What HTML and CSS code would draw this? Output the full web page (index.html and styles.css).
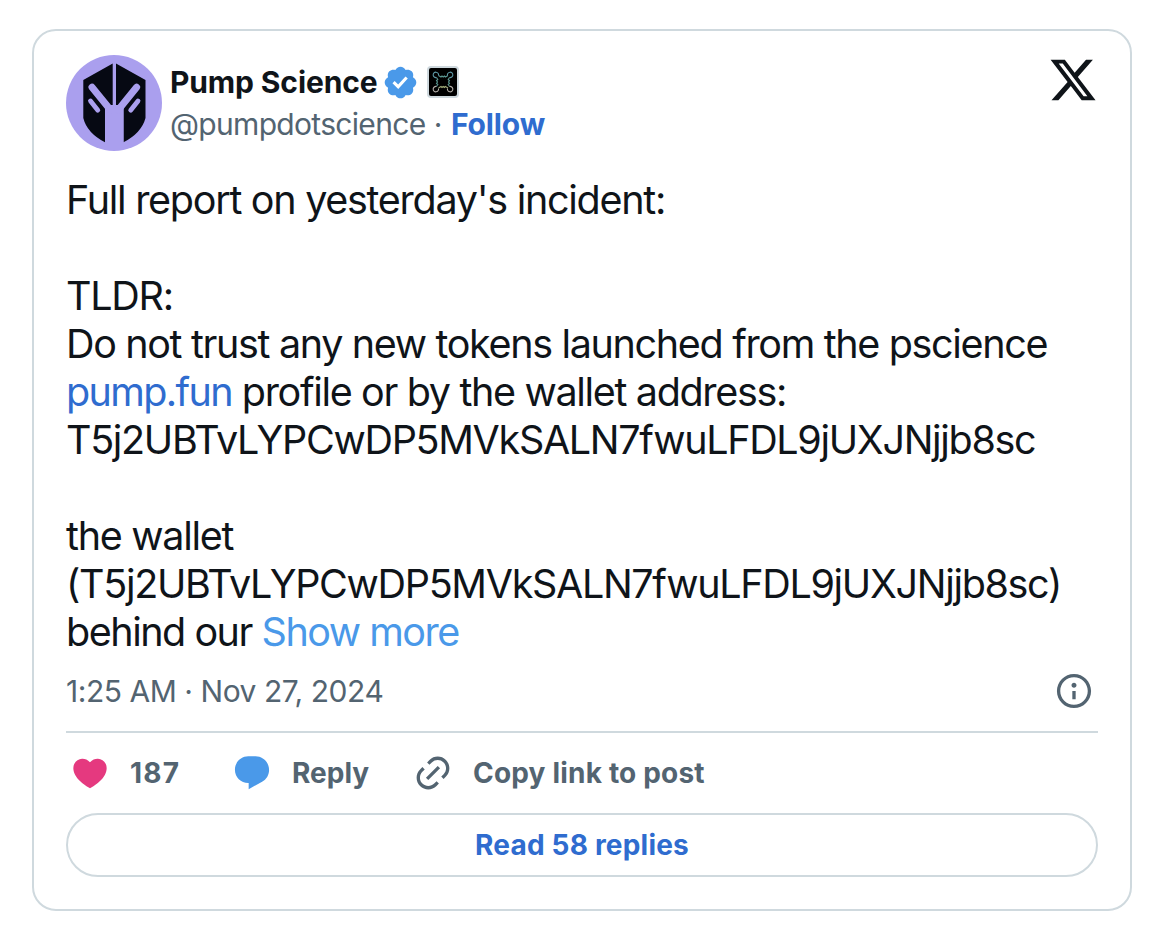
FILE: index.html
```html
<!DOCTYPE html>
<html lang="en">
<head>
<meta charset="utf-8">
<title>Pump Science post</title>
<link rel="stylesheet" href="styles.css">
</head>
<body>
<article class="card">
  <header class="header">
    <svg class="avatar" viewBox="0 0 96 96">
      <circle cx="48" cy="48" r="48" fill="#aa9fee"/>
      <path d="M46.700 8.500L17.300 25V63Q21 78 39 87.300V50H46.700ZM50 8.500L79.500 25V63Q75.500 78 57.500 87.300V50H50Z" fill="#060913"/>
      <path d="M39 53L46.700 51.500H50L57.500 53V88H39Z" fill="#aa9fee"/>
      <path d="M26 32.300L44.500 55M70.600 32.300L52.200 55" stroke="#aa9fee" stroke-width="7" stroke-linecap="round"/>
      <path d="M24.500 46l7.300 9.200M72 46l-7.300 9.200" stroke="#aa9fee" stroke-width="4.800" stroke-linecap="round"/>
    </svg>
    <div class="author">
      <div class="name-row">
        <span class="name">Pump Science</span>
        <svg class="verified" viewBox="0 0 24 24"><path d="M22.250 12c0-1.430-.88-2.670-2.190-3.340.46-1.390.2-2.900-.81-3.910s-2.520-1.270-3.910-.81c-.66-1.310-1.910-2.190-3.340-2.190s-2.670.88-3.330 2.190c-1.400-.46-2.910-.2-3.920.81s-1.260 2.520-.8 3.910c-1.310.67-2.200 1.910-2.200 3.340s.89 2.670 2.200 3.340c-.46 1.390-.21 2.900.8 3.910s2.520 1.260 3.910.81c.67 1.310 1.910 2.190 3.340 2.190s2.680-.88 3.340-2.190c1.390.45 2.900.2 3.910-.81s1.270-2.520.81-3.910c1.310-.67 2.190-1.910 2.190-3.340zm-11.710 4.200L6.800 12.460l1.410-1.420 2.260 2.260 4.800-5.230 1.470 1.360-6.200 6.770z"/></svg>
        <svg class="affiliate" viewBox="0 0 32 32">
          <rect x="1" y="1" width="30" height="30" rx="3" fill="#000" stroke="#cfd9de" stroke-width="2"/>
          <g fill="none" stroke-width="1.100">
            <path d="M11.500 9.500l2.500 1.500 1-1 1.200 1 1.200-1 1 1 2.600-1.500M9.500 11.500l1.300 2-1.300 1 1 1.500-1 1.500 1.300 1-1.300 2M22.500 11.500l-1.300 2 1.300 1-1 1.500 1 1.500-1.300 1 1.300 2" stroke="#5b9690"/>
            <path d="M11.500 22l2.500-1.500 1 1 1.200-1 1.200 1 1-1 2.600 1.500" stroke="#a0aa78"/>
            <path d="M9.500 11.500a2.700 2.700 0 1 1 2-2M22.500 11.500a2.700 2.700 0 1 0-2-2" stroke="#5f9ba8"/>
            <path d="M9.500 20.500a2.700 2.700 0 1 0 2 2M22.500 20.500a2.700 2.700 0 1 1-2 2" stroke="#b5b0aa"/>
          </g>
        </svg>
      </div>
      <div class="handle-row"><span class="handle">@pumpdotscience</span><span class="dot">·</span><a class="follow">Follow</a></div>
    </div>
    <svg class="x-logo" viewBox="0 0 24 24"><path d="M18.244 2.250h3.308l-7.227 8.260 8.502 11.240H16.170l-5.214-6.817L4.990 21.750H1.680l7.730-8.835L1.254 2.250H8.080l4.713 6.231zm-1.161 17.520h1.833L7.084 4.126H5.117z"/></svg>
  </header>
  <div class="body">
    <p>Full report on yesterday's incident:</p>
    <p class="gap">TLDR:<br><span class="trust">Do not trust any new tokens launched from the pscience</span><br><span class="profile"><a class="link">pump.fun</a> profile or by the wallet address:</span><br><span class="address">T5j2UBTvLYPCwDP5MVkSALN7fwuLFDL9jUXJNjjb8sc</span></p>
    <p class="gap">the wallet<br><span class="address">(T5j2UBTvLYPCwDP5MVkSALN7fwuLFDL9jUXJNjjb8sc)</span><br><span class="last">behind our <a class="more">Show more</a></span></p>
  </div>
  <div class="meta">
    <time class="time">1:25 AM · Nov 27, 2024</time>
    <svg class="icon info" viewBox="0 0 24 24"><path d="M13.500 8.500c0 .83-.67 1.500-1.500 1.500s-1.500-.67-1.500-1.500S11.170 7 12 7s1.500.67 1.500 1.500zM13 17v-5h-2v5h2zm-1 5.250c5.660 0 10.250-4.590 10.250-10.250S17.660 1.750 12 1.750 1.750 6.340 1.750 12 6.340 22.250 12 22.250zM20.250 12c0 4.560-3.690 8.250-8.250 8.250S3.750 16.560 3.750 12 7.440 3.750 12 3.750s8.250 3.690 8.250 8.250z"/></svg>
  </div>
  <div class="actions">
    <div class="action like"><svg class="icon heart" viewBox="0 0 24 24"><path d="M20.884 13.190c-1.351 2.480-4.001 5.120-8.379 7.670l-.503.3-.504-.3c-4.379-2.550-7.029-5.190-8.382-7.670-1.360-2.500-1.410-4.860-.514-6.670.887-1.790 2.647-2.910 4.601-3.010 1.651-.09 3.368.56 4.798 2.010 1.429-1.450 3.146-2.100 4.796-2.010 1.954.1 3.714 1.220 4.601 3.010.896 1.810.846 4.170-.514 6.670z"/></svg><span class="count">187</span></div>
    <div class="action reply"><svg class="icon bubble" viewBox="0 0 24 24"><path d="M1.751 10c0-4.420 3.584-8 8.005-8h4.366c4.490 0 8.129 3.640 8.129 8.130 0 2.960-1.607 5.680-4.196 7.110l-8.054 4.460v-3.690h-.067c-4.490.1-8.183-3.510-8.183-8.010z"/></svg><span>Reply</span></div>
    <div class="action copy"><svg class="icon" viewBox="0 0 24 24"><path d="M18.360 5.640c-1.950-1.960-5.110-1.960-7.070 0L9.880 7.050 8.460 5.640l1.420-1.420c2.730-2.730 7.160-2.730 9.900 0 2.730 2.740 2.730 7.170 0 9.900l-1.420 1.420-1.410-1.420 1.410-1.410c1.960-1.960 1.960-5.120 0-7.070zm-2.120 3.530l-7.070 7.070-1.410-1.410 7.070-7.070 1.410 1.410zm-12.020.71l1.420-1.420 1.410 1.420-1.410 1.410c-1.960 1.960-1.960 5.120 0 7.070 1.950 1.960 5.110 1.960 7.070 0l1.410-1.410 1.420 1.410-1.420 1.420c-2.730 2.730-7.160 2.730-9.900 0-2.730-2.740-2.730-7.170 0-9.900z"/></svg><span>Copy link to post</span></div>
  </div>
  <a class="replies">Read 58 replies</a>
</article>
</body>
</html>
```
FILE: styles.css
```css
* { box-sizing: border-box; }
body {
  margin: 0;
  padding: 29px 36px 0 32px;
  background: #fff;
  color: #0f1419;
  font-family: Inter, "Liberation Sans", sans-serif;
}
svg { display: block; flex: none; }
p { margin: 0; }
.card {
  height: 882px;
  padding: 24px 32px 0;
  border: 2px solid #cfd9de;
  border-radius: 24px;
}
.header { display: flex; height: 96px; }
.avatar { width: 96px; height: 96px; }
.author { flex: 1; padding: 6px 0 0 8px; }
.name-row { display: flex; align-items: center; height: 42px; }
.name { font-size: 30px; font-weight: 700; line-height: 42px; letter-spacing: -0.13px; width: 212px; white-space: nowrap; }
.verified { width: 37px; height: 37px; fill: #4a99e9; }
.affiliate { width: 32px; height: 32px; margin-left: 8px; }
.handle-row { display: flex; height: 42px; line-height: 42px; font-size: 30px; color: #536471; white-space: nowrap; }
.handle { width: 255px; letter-spacing: -0.68px; }
.dot { width: 26px; text-align: center; }
.follow { color: #2f6ccf; font-weight: 700; letter-spacing: -0.15px; }
.x-logo { width: 50px; height: 50px; fill: #0f1419; }
.body { margin-top: 25px; font-size: 39.5px; font-weight: 440; line-height: 48px; letter-spacing: -1.28px; white-space: nowrap; }
.gap { margin-top: 48px; }
.trust { letter-spacing: -1.34px; }
.profile { letter-spacing: -1.34px; }
.address { letter-spacing: -1.33px; }
.last { letter-spacing: -1.48px; }
.link { color: #2f6ccf; letter-spacing: -1.62px; }
.more { color: #4a99e9; }
.meta { display: flex; justify-content: space-between; align-items: center; height: 40px; margin-top: 15px; padding-right: 4px; }
.time { font-size: 30px; color: #536471; letter-spacing: -0.46px; }
.icon { width: 40px; height: 40px; fill: #536471; }
.heart { fill: #e5397f; }
.bubble { fill: #4a99e9; }
.actions { display: flex; height: 82px; margin-top: 20px; padding-left: 4px; border-top: 2px solid #cfd9de; }
.action { display: flex; align-items: center; gap: 20px; height: 80px; color: #536471; font-size: 28px; font-weight: 700; white-space: nowrap; }
.like { width: 162px; }
.count { letter-spacing: 1.2px; }
.reply { width: 181px; }
.copy { letter-spacing: 0.19px; }
.replies { display: flex; align-items: center; justify-content: center; height: 64px; border: 2px solid #cfd9de; border-radius: 32px; color: #2f6ccf; font-size: 28px; font-weight: 700; letter-spacing: 0.2px; }
```
